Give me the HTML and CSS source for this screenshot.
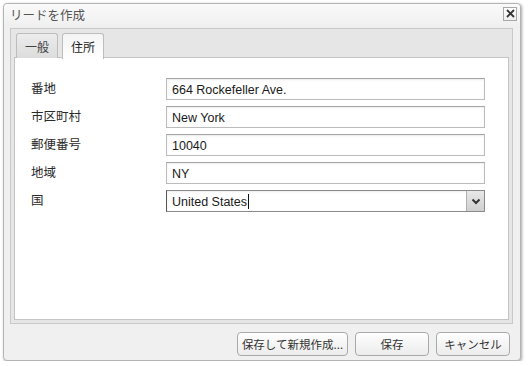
FILE: index.html
```html
<!DOCTYPE html>
<html lang="ja">
<head>
<meta charset="utf-8">
<link rel="stylesheet" href="styles.css">
</head>
<body>
<div class="window">
  <div class="titlebar">
    <span class="title">リードを作成</span>
    <span class="close"><svg width="11" height="11" viewBox="0 0 11 11"><path d="M2 2 L9 9 M9 2 L2 9" stroke="#333" stroke-width="1.8" fill="none"/></svg></span>
  </div>
  <div class="tabwrap">
    <div class="tabs">
      <div class="tab">一般</div>
      <div class="tab active">住所</div>
    </div>
    <div class="panel">
      <div class="row"><label>番地</label><div class="input">664 Rockefeller Ave.</div></div>
      <div class="row"><label>市区町村</label><div class="input">New York</div></div>
      <div class="row"><label>郵便番号</label><div class="input">10040</div></div>
      <div class="row"><label>地域</label><div class="input">NY</div></div>
      <div class="row"><label>国</label><div class="input select"><span class="val">United States<span class="caret"></span></span><span class="drop"><svg width="10" height="7" viewBox="0 0 10 7"><path d="M1.5 1.5 L5 5 L8.5 1.5" stroke="#333" stroke-width="2" fill="none"/></svg></span></div></div>
    </div>
  </div>
  <div class="footer">
    <button class="btn wide">保存して新規作成...</button>
    <button class="btn">保存</button>
    <button class="btn">キャンセル</button>
  </div>
</div>
</body>
</html>
```
FILE: styles.css
```css
html, body {
  margin: 0;
  padding: 0;
  background: #fff;
}
body {
  font-family: "Liberation Sans", "Noto Sans CJK JP", sans-serif;
  font-size: 12px;
  color: #333;
}
.window {
  margin: 3px 0 0 3px;
  width: 516px;
  height: 356px;
  border: 1px solid #b4b4b4;
  border-radius: 4px;
  background: #f0f0f0;
  box-shadow: 1px 1px 3px rgba(0,0,0,0.35);
  display: flex;
  flex-direction: column;
}
.titlebar {
  height: 24px;
  display: flex;
  align-items: center;
  justify-content: space-between;
  padding: 0 3px 0 6px;
  background: linear-gradient(#fafafa, #efefef);
  border-radius: 4px 4px 0 0;
}
.title {
  font-family: "Noto Sans CJK JP", sans-serif;
  font-size: 12.5px;
  color: #555;
  margin-top: -4px;
}
.close {
  width: 12px;
  height: 12px;
  border: 1px solid #a8a8a8;
  background: linear-gradient(#fff, #eee);
  display: flex;
  align-items: center;
  justify-content: center;
  margin-top: -5px;
}
.tabwrap {
  margin: 0 7px 0 6px;
  border: 1px solid #c9c9c9;
  background: #e6e6e6;
  display: flex;
  flex-direction: column;
  height: 294px;
}
.tabs {
  display: flex;
  gap: 4px;
  padding: 4px 0 0 5px;
  height: 25px;
  margin-bottom: -1px;
  position: relative;
  z-index: 1;
}
.tab {
  width: 40px;
  height: 24px;
  border: 1px solid #bdbdbd;
  border-bottom: none;
  border-radius: 3px 3px 0 0;
  background: linear-gradient(#ececec, #dcdcdc);
  font-family: "Noto Sans CJK JP", sans-serif;
  font-size: 12px;
  color: #444;
  display: flex;
  align-items: center;
  justify-content: center;
}
.tab.active {
  height: 25px;
  background: linear-gradient(#f4f4f4, #fff);
  color: #222;
}
.panel {
  margin: 0 3px 3px 3px;
  flex: 1;
  border: 1px solid #c4c4c4;
  background: #fff;
  padding: 20px 0 0 16px;
  display: flex;
  flex-direction: column;
  gap: 6px;
}
.row {
  display: flex;
  align-items: center;
  height: 22px;
}
.row label {
  width: 135px;
  font-family: "Noto Sans CJK JP", sans-serif;
  font-size: 12.5px;
  color: #2a2a2a;
  margin-top: -3px;
}
.input {
  box-sizing: border-box;
  width: 319px;
  height: 22px;
  border: 1px solid #bcbcbc;
  border-top-color: #a4a4a4;
  box-shadow: inset 0 1px 2px rgba(0,0,0,0.08);
  padding: 1px 5px 0;
  display: flex;
  align-items: center;
  font-size: 12.5px;
  color: #1a1a1a;
}
.select {
  border-color: #8a8a8a;
  border-left-color: #555;
  padding-right: 0;
  padding-top: 0;
  justify-content: space-between;
}
.val {
  display: flex;
  align-items: center;
  padding-top: 1px;
}
.caret {
  display: inline-block;
  width: 1px;
  height: 15px;
  background: #111;
  margin-left: 1px;
}
.drop {
  width: 17px;
  height: 20px;
  border-left: 1px solid #b0b0b0;
  background: linear-gradient(#e8e8e8, #cfcfcf);
  display: flex;
  align-items: center;
  justify-content: center;
}
.footer {
  flex: 1;
  display: flex;
  justify-content: flex-end;
  align-items: flex-start;
  gap: 7px;
  padding: 8px 10px 0 0;
}
.btn {
  height: 24px;
  width: 74px;
  border: 1px solid #a9a9a9;
  border-radius: 4px;
  background: linear-gradient(#fefefe, #ececec);
  font-family: "Noto Sans CJK JP", sans-serif;
  font-size: 11.5px;
  color: #333;
  padding: 0;
}
.btn.wide {
  width: 111px;
}
```
